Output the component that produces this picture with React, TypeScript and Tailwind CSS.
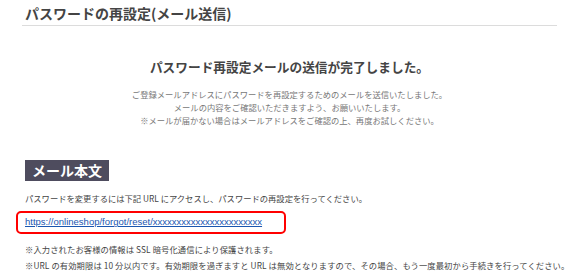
export default function App() {
  const font = { fontFamily: '"Noto Sans CJK JP", "Noto Sans", sans-serif' }
  return (
    <div className="w-[580px] h-[279px] bg-white overflow-hidden text-[#333]" style={font}>
      <div className="pl-[22px] pr-[23px]">
        <h1 className="h-[26px] pl-[3px] pt-[4px] border-b border-[#dcdcdc] text-[14px] font-bold leading-[18px] text-[#444]">
          パスワードの再設定(メール送信)
        </h1>

        <h2 className="mt-[32px] text-center text-[12.7px] font-bold leading-[18px] text-[#444]">
          パスワード再設定メールの送信が完了しました。
        </h2>

        <div className="mt-[12px] text-center text-[8.3px] leading-[13px] text-[#777]">
          <p>ご登録メールアドレスにパスワードを再設定するためのメールを送信いたしました。</p>
          <p>メールの内容をご確認いただきますよう、お願いいたします。</p>
          <p>※メールが届かない場合はメールアドレスをご確認の上、再度お試しください。</p>
        </div>

        <div className="mt-[30px] pl-[3px]">
          <span className="inline-block bg-[#4e4c5e] px-[7px] h-[21px] leading-[21px] text-[14px] font-bold text-white">
            メール本文
          </span>
        </div>

        <p className="mt-[10px] pl-[3px] text-[8.3px] leading-[14px] text-[#444]">
          パスワードを変更するには下記 URL にアクセスし、パスワードの再設定を行ってください。
        </p>

        <div className="mt-[6px] ml-[-6px] w-[270px] h-[23px] border-2 border-[#ff0000] rounded-[5px] pl-[7px] flex items-center">
          <a className="text-[9.5px] text-[#1a56b0] underline" style={{ fontFamily: '"Liberation Sans", Arial, sans-serif' }}>
            https://onlineshop/forgot/reset/xxxxxxxxxxxxxxxxxxxxxxx
          </a>
        </div>

        <div className="mt-[7px] pl-[3px] text-[8.3px] leading-[16px] text-[#444] tracking-[0.1px]">
          <p>※入力されたお客様の情報は SSL 暗号化通信により保護されます。</p>
          <p className="whitespace-nowrap">※URL の有効期限は 10 分以内です。有効期限を過ぎますと URL は無効となりますので、その場合、もう一度最初から手続きを行ってください。</p>
        </div>
      </div>
    </div>
  )
}
